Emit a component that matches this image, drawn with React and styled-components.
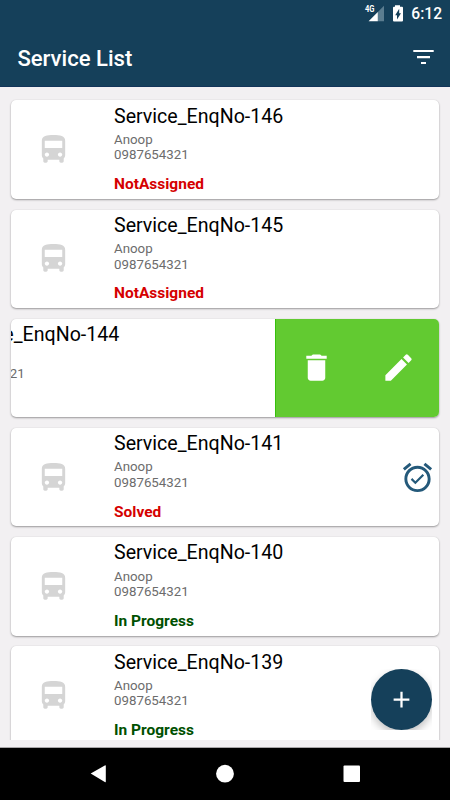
import React from 'react';
import styled, { createGlobalStyle } from 'styled-components';
import { MdDelete, MdEdit, MdAlarmOn, MdAdd } from 'react-icons/md';

const GlobalStyle = createGlobalStyle`
  * { box-sizing: border-box; }
  body { margin: 0; background: #f2f0f2; }
`;

const Screen = styled.div`
  position: relative;
  display: flex;
  flex-direction: column;
  width: 450px;
  height: 800px;
  overflow: hidden;
  background: #f2f0f2;
  font-family: Roboto, sans-serif;
`;

const Header = styled.header`
  flex: none;
  height: 87px;
  background: #15405a;
  color: #fff;
  border-bottom: 1px solid #123459;
`;

const StatusBar = styled.div`
  display: flex;
  align-items: center;
  justify-content: flex-end;
  height: 26px;
  padding: 1px 8px 0 0;
`;

const StatusIcons = styled.svg`
  width: 40px;
  height: 20px;
  margin-right: 7px;
`;

const Clock = styled.span`
  font-size: 15.6px;
  font-weight: 500;
  line-height: 20px;
`;

const Toolbar = styled.div`
  display: flex;
  align-items: center;
  justify-content: space-between;
  height: 61px;
  padding: 0 16px 0 17.4px;
`;

const Title = styled.h1`
  margin: 2px 0 0;
  font-size: 22.1px;
  font-weight: 500;
  line-height: 26px;
`;

const FilterIcon = styled.svg`
  width: 21px;
  height: 14px;
`;

const List = styled.main`
  flex: none;
  display: flex;
  flex-direction: column;
  gap: 10.8px;
  height: 653px;
  padding: 13.4px 11px 0;
  overflow: hidden;
`;

const Card = styled.article`
  flex: none;
  display: flex;
  height: 98.4px;
  border-radius: 5px;
  overflow: hidden;
  background: #fff;
  box-shadow: 0 1px 2px rgba(0, 0, 0, 0.36), 0 0 1px rgba(0, 0, 0, 0.12);
`;

const Row = styled.div`
  flex: none;
  display: flex;
  width: 428px;
  margin-left: ${(p) => (p.$swiped ? '-164px' : '0')};
`;

const Thumb = styled.div`
  flex: none;
  display: flex;
  align-items: center;
  width: 103px;
  padding-left: 24.8px;
  color: #d5d5d5;
`;

const BusIcon = styled.svg`
  width: 35px;
  height: 35px;
  fill: currentColor;
`;

const Details = styled.div`
  flex: 1;
  padding-top: 4.2px;
`;

const Name = styled.h2`
  margin: 0 0 4.2px;
  font-size: 19.6px;
  font-weight: 400;
  line-height: 23px;
  color: #000;
`;

const Line = styled.div`
  height: 15.6px;
  font-size: 13.3px;
  line-height: 15.6px;
  color: #6c6c6c;
`;

const Status = styled.div`
  margin-top: 11px;
  font-size: 15.5px;
  font-weight: 700;
  line-height: 20px;
  color: ${(p) => (p.$done ? '#005000' : '#d50000')};
`;

const Reminder = styled.div`
  display: flex;
  align-items: center;
  padding-right: 4px;
  color: #24597a;

  svg {
    width: 35px;
    height: 35px;
  }
`;

const Actions = styled.div`
  flex: none;
  display: flex;
  width: 164px;
  background: #62ca31;
  box-shadow: inset 1px 0 #36c00c;
`;

const Action = styled.button`
  flex: 1;
  display: flex;
  align-items: center;
  justify-content: center;
  padding: 0;
  border: 0;
  background: none;
  color: #fff;

  svg {
    width: 35px;
    height: 35px;
  }
`;

const Fab = styled.button`
  position: absolute;
  right: 17.6px;
  bottom: 70px;
  display: flex;
  align-items: center;
  justify-content: center;
  width: 61px;
  height: 61px;
  padding: 0;
  border: 0;
  border-radius: 50%;
  background: #15405a;
  color: #fff;

  svg {
    width: 27px;
    height: 27px;
  }
`;

const FabShade = styled.div`
  position: absolute;
  right: 18px;
  bottom: 70px;
  width: 61px;
  height: 61px;
  overflow: hidden;

  &::before {
    content: '';
    display: block;
    width: 61px;
    height: 61px;
    border-radius: 50%;
    box-shadow: 0 4px 8px rgba(0, 0, 0, 0.25);
  }
`;

const NavBar = styled.nav`
  flex: none;
  display: flex;
  align-items: center;
  justify-content: space-between;
  height: 53px;
  margin-top: auto;
  padding: 0 89px;
  background: #000;
  border-top: 1px solid #a9a7a9;
`;

const NavIcon = styled.svg`
  width: 18px;
  height: 20px;
`;

const services = [
  { no: 146, status: 'NotAssigned' },
  { no: 145, status: 'NotAssigned' },
  { no: 144, swiped: true },
  { no: 141, status: 'Solved', reminder: true },
  { no: 140, status: 'In Progress' },
  { no: 139, status: 'In Progress' },
];

function ServiceCard({ no, status, swiped, reminder }) {
  return (
    <Card>
      <Row $swiped={swiped}>
        <Thumb>
          <BusIcon viewBox="0 0 24 24">
            <path d="M4 16c0 .88.39 1.67 1 2.22V20c0 .55.45 1 1 1h1c.55 0 1-.45 1-1v-1h8v1c0 .55.45 1 1 1h1c.55 0 1-.45 1-1v-1.78c.61-.55 1-1.34 1-2.22V6c0-3.5-3.58-4-8-4s-8 .5-8 4v10zm3.5 1c-.83 0-1.5-.67-1.5-1.5S6.67 14 7.5 14s1.5.67 1.5 1.5S8.33 17 7.5 17zm9 0c-.83 0-1.5-.67-1.5-1.5s.67-1.5 1.5-1.5 1.5.67 1.5 1.5-.67 1.5-1.5 1.5zm1.5-6H6V6h12v5z" />
          </BusIcon>
        </Thumb>
        <Details>
          <Name>Service_EnqNo-{no}</Name>
          <Line>{swiped ? '' : 'Anoop'}</Line>
          <Line>0987654321</Line>
          {status && <Status $done={status === 'In Progress'}>{status}</Status>}
        </Details>
        {reminder && (
          <Reminder>
            <MdAlarmOn />
          </Reminder>
        )}
      </Row>
      {swiped && (
        <Actions>
          <Action aria-label="Delete">
            <MdDelete />
          </Action>
          <Action aria-label="Edit">
            <MdEdit />
          </Action>
        </Actions>
      )}
    </Card>
  );
}

export default function App() {
  return (
    <Screen>
      <GlobalStyle />
      <Header>
        <StatusBar>
          <StatusIcons viewBox="0 0 40 20">
            <text
              x="1"
              y="8.2"
              fill="#fff"
              fontSize="9"
              fontWeight="700"
              textLength="9.5"
              lengthAdjust="spacingAndGlyphs"
            >
              4G
            </text>
            <path d="M20 1.7V17.2H13.8V8z" fill="#5b7d90" />
            <path d="M13.8 8V17.2H4.6z" fill="#fff" />
            <path
              d="M31 1.2h5v1.6h2a1 1 0 0 1 1 1V16.6a1 1 0 0 1-1 1h-8a1 1 0 0 1-1-1V3.8a1 1 0 0 1 1-1h1z"
              fill="#fff"
            />
            <path d="M35.2 4.8V9.2H37L33 15.6V11.3H31.2z" fill="#15405a" />
          </StatusIcons>
          <Clock>6:12</Clock>
        </StatusBar>
        <Toolbar>
          <Title>Service List</Title>
          <FilterIcon viewBox="0 0 21 14">
            <path d="M.3 0h20.4v2H.3zM4 6h13v2.2H4zM8 12h5v2H8z" fill="#fff" />
          </FilterIcon>
        </Toolbar>
      </Header>
      <List>
        {services.map((s) => (
          <ServiceCard key={s.no} {...s} />
        ))}
      </List>
      <FabShade />
      <Fab aria-label="Add service">
        <MdAdd />
      </Fab>
      <NavBar>
        <NavIcon viewBox="0 0 18 20">
          <path d="M1.7 9.6L15.8 1.4Q16.8.9 16.8 1.8V17.6Q16.8 18.6 15.8 18z" fill="#fff" />
        </NavIcon>
        <NavIcon viewBox="0 0 18 20">
          <circle cx="9" cy="9.7" r="8.9" fill="#fff" />
        </NavIcon>
        <NavIcon viewBox="0 0 18 20">
          <rect x="0.5" y="1.5" width="16.5" height="16.5" rx="1" fill="#fff" />
        </NavIcon>
      </NavBar>
    </Screen>
  );
}
